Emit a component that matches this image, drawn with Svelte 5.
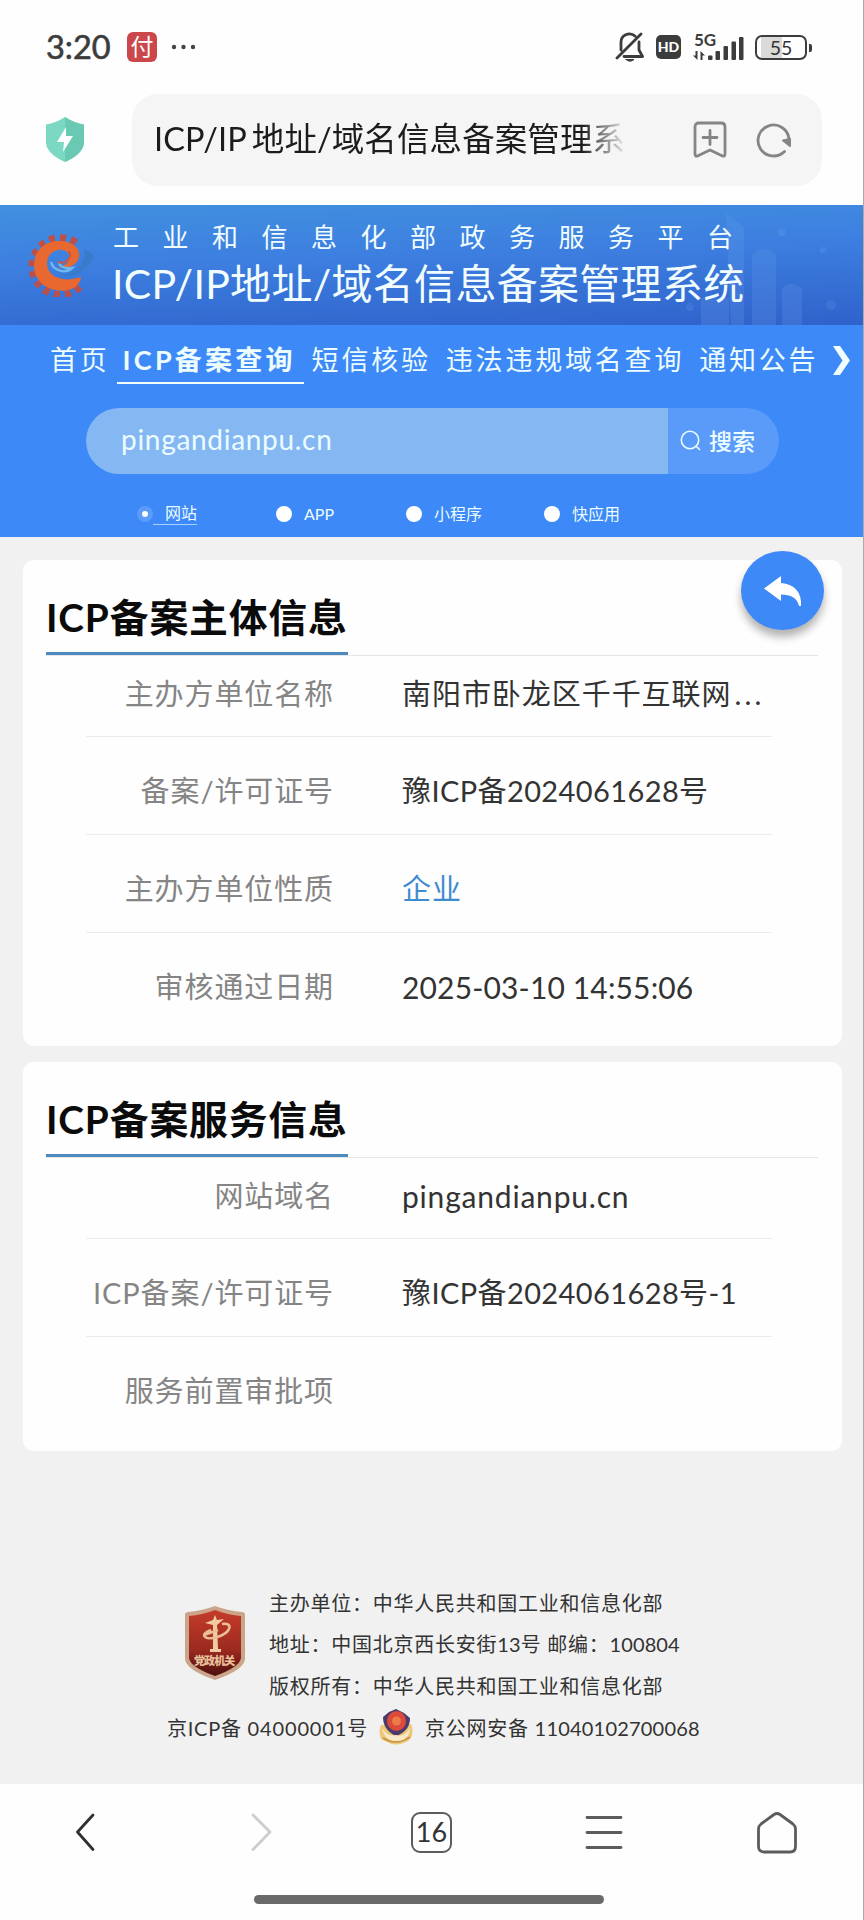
<script>
	const tabs = [
		{ name: '首页' },
		{ name: 'ICP备案查询', active: true },
		{ name: '短信核验' },
		{ name: '违法违规域名查询' },
		{ name: '通知公告' }
	];

	const types = ['网站', 'APP', '小程序', '快应用'];
	let selected = '网站';
	let keyword = 'pingandianpu.cn';

	const cards = [
		{
			title: 'ICP备案主体信息',
			rows: [
				{ label: '主办方单位名称', value: '南阳市卧龙区千千互联网', kind: 'company' },
				{ label: '备案/许可证号', value: '豫ICP备2024061628号' },
				{ label: '主办方单位性质', value: '企业', kind: 'link' },
				{ label: '审核通过日期', value: '2025-03-10 14:55:06', kind: 'date' }
			]
		},
		{
			title: 'ICP备案服务信息',
			rows: [
				{ label: '网站域名', value: 'pingandianpu.cn', kind: 'domain' },
				{ label: 'ICP备案/许可证号', value: '豫ICP备2024061628号-1' },
				{ label: '服务前置审批项', value: '' }
			]
		}
	];
</script>

<div class="phone">
	<div class="status">
		<span class="time">3:20</span>
		<span class="pay">付</span>
		<svg class="dots" width="26" height="6" viewBox="0 0 26 6" fill="#444"><circle cx="3" cy="3" r="2.2"/><circle cx="12.5" cy="3" r="2.2"/><circle cx="22" cy="3" r="2.2"/></svg>
		<div class="status-right">
			<svg width="30" height="32" viewBox="0 0 30 32" fill="none" stroke="#3c3c3c" stroke-width="2.8" stroke-linecap="round" stroke-linejoin="round">
				<path d="M6 19V12a8.5 8.5 0 0 1 14-7M24 11v8l3.500 6.500H9M2 27 26 3"/>
				<path d="M11 28.500h8q-4 3.500-8 0z" fill="#3c3c3c" stroke-width="1"/>
			</svg>
			<span class="hd">HD</span>
			<svg class="signal" width="51" height="29" viewBox="0 0 51 29" fill="#3c3c3c">
				<text x="1" y="12.500" font-size="17" font-weight="700" font-family="Lato, sans-serif">5G</text>
				<path d="M2.500 18h2v9L0 22.500h2.500zM7.500 27h2v-4.500H12L7.500 18z"/>
				<rect x="15" y="22.500" width="4.500" height="4.500" rx="1"/><rect x="22.500" y="18" width="4.500" height="9" rx="1"/><rect x="30.500" y="13" width="4.500" height="14" rx="1"/><rect x="38.500" y="8.500" width="4.500" height="18.500" rx="1"/><rect x="46" y="4" width="4.500" height="23" rx="1"/>
			</svg>
			<span class="battery">55</span>
		</div>
	</div>

	<div class="address">
		<svg class="shield" width="40" height="46" viewBox="0 0 40 46">
			<path d="M20 0Q29 6 39 7.500V26Q38 37 20 45Q2 37 1 26V7.500Q11 6 20 0Z" fill="#7bd8c2"/>
			<path d="M20 0Q29 6 39 7.500V26Q38 37 20 45Z" fill="#69c9b3"/>
			<path d="M21 10 12 25h7l-1 10 10-16h-7z" fill="#fff"/>
		</svg>
		<div class="url">
			<span class="url-text"><span class="url-latin">ICP/IP</span>地址/域名信息备案管理系</span>
			<svg width="34" height="38" viewBox="0 0 34 38" fill="none" stroke="#858585" stroke-width="2.800" stroke-linecap="round" stroke-linejoin="round">
				<path d="M6 2h22q4 0 4 4v27q0 3.500-3.500 1.500L17 29 5.500 34.500Q2 36.500 2 33V6q0-4 4-4zM17 9.500v14M10 16.500h14"/>
			</svg>
			<svg class="reload" width="38" height="38" viewBox="0 0 38 38" fill="none" stroke="#858585" stroke-width="2.800" stroke-linecap="round">
				<path d="M29.500 30.500A15.500 15.500 0 1 1 34 18"/>
				<path d="M28 19.500 35 18v7z" fill="#858585" stroke-width="2" stroke-linejoin="round"/>
			</svg>
		</div>
	</div>

	<header>
		<svg class="skyline" width="220" height="120" viewBox="0 0 220 120">
			<defs><linearGradient id="tower" x1="0" y1="0" x2="0" y2="1"><stop offset="0" stop-color="#9cc8ff" stop-opacity=".08"/><stop offset="1" stop-color="#9cc8ff" stop-opacity=".13"/></linearGradient></defs>
			<g fill="url(#tower)">
				<path d="M83 8 101 22V120H88zM109 50q12-12 24 0v70h-24zM139 84q9-10 20 0v36h-20zM58 93h28v27H58z"/>
				<circle cx="139" cy="27" r="4"/><circle cx="180" cy="45" r="3"/><circle cx="188" cy="100" r="5"/><circle cx="47" cy="102" r="4"/>
			</g>
		</svg>
		<svg class="logo" width="68" height="64" viewBox="0 0 68 64" fill="none">
			<path d="M52 54A28.500 28.500 0 1 1 51 11.500" stroke="#bb504a" stroke-width="7" stroke-dasharray="6 5"/>
			<path d="M53 44C52 54 42 59 30 57.500C16 56 6 46 6 32C6 17 18 7 32 8C45 8 53 16 51 24C49 33 38 37 29 34C36 34 43 29 41 22C38 14 24 15 20 25C15 39 29 52 53 44Z" fill="#e9682f"/>
			<path d="M23 31c5 14 22 13 31-1 3-6 3-9 1-14 5 2 8 3 11 7-2 1-2 2-2 4-8 15-29 23-39 8z" fill="#397bcb"/>
			<path d="M23 29c2 9 15 12 21 6-6 1-12-1-13-5" stroke="#6fb7ed" stroke-width="2.500"/>
			<path d="M30 29c7 3 15-4 11-11" stroke="#c15a4c" stroke-width="2"/>
		</svg>
		<div class="titles">
			<p class="platform">工业和信息化部政务服务平台</p>
			<h1>ICP/IP地址/域名信息备案管理系统</h1>
		</div>
	</header>

	<section class="query">
		<nav>
			{#each tabs as tab}
				<a class:active={tab.active}>{tab.name}</a>
			{/each}
			<svg width="17" height="29" viewBox="0 0 17 29"><path d="M0 0h7l10 14.500L7 29H0l9.500-14.500z" fill="#f2fdff"/></svg>
		</nav>
		<div class="search">
			<div class="input">{keyword}</div>
			<button>
				<svg width="21" height="21" viewBox="0 0 21 21" fill="none" stroke="#e9fbff" stroke-width="1.600" stroke-linecap="round"><circle cx="10" cy="10" r="8.700"/><path d="m16.200 16.200 3.300 3.300"/></svg>
				搜索
			</button>
		</div>
		<div class="types">
			{#each types as type}
				<label class:checked={type === selected}><i></i><span>{type}</span></label>
			{/each}
		</div>
	</section>

	<main>
		{#each cards as card}
			<section class="card">
				<div class="card-head"><h2>{card.title}</h2></div>
				<dl>
					{#each card.rows as row}
						<div class="row">
							<dt>{row.label}</dt>
							<dd class={row.kind}>{row.value}{#if row.kind === 'company'}<span class="more">...</span>{/if}</dd>
						</div>
					{/each}
				</dl>
			</section>
		{/each}
		<button class="back">
			<svg width="38" height="32" viewBox="0 0 38 32" fill="#fff"><path d="M0 13.500 17 1v7C31 9 38 18 37 31h-2C33 23 27 19.500 17 19.500V26z"/></svg>
		</button>
	</main>

	<footer>
		<div class="sponsor">
			<svg width="62" height="76" viewBox="0 0 62 76">
				<defs><linearGradient id="red" x1="0" y1="0" x2="0" y2="1"><stop offset="0" stop-color="#c43c29"/><stop offset=".6" stop-color="#9c2a20"/><stop offset="1" stop-color="#4c100c"/></linearGradient></defs>
				<path d="M31 1Q45 6 58 7q3 0 3 3V54Q60 65 31 75Q2 65 1 54V10q0-3 3-3Q17 6 31 1Z" fill="#cba58a"/>
				<path d="M31 5Q44 10 57 11V53Q56 62 31 71Q6 62 5 53V11Q18 10 31 5Z" fill="url(#red)"/>
				<path d="M29 20 21 18l8-3 2-5 2 5 7-1-7 6 1 24h3v3H26v-3h3z" fill="#f0caa2"/>
				<path d="M38 19c12-2 9 9-5 13-13 4-18-3-6-7M20 30l14-5" fill="none" stroke="#eabf95" stroke-width="2.500"/>
				<text x="31" y="60" text-anchor="middle" font-size="11" font-weight="900" font-family="Noto Sans CJK SC, sans-serif" fill="#e9c09c" textLength="42">党政机关</text>
			</svg>
			<div class="lines">
				<p>主办单位：中华人民共和国工业和信息化部</p>
				<p>地址：中国北京西长安街<b>13</b>号 邮编：<b>100804</b></p>
				<p>版权所有：中华人民共和国工业和信息化部</p>
			</div>
		</div>
		<div class="records">
			<span class="icp">京ICP备 <b>04000001</b>号</span>
			<svg width="36" height="38" viewBox="0 0 36 38">
				<path d="M3 17Q0 23 3 31L7 33q11 7 23 0l3-3q3-7 0-14z" fill="#edc878"/>
				<path d="M5 30q13 8 27-1" fill="none" stroke="#c99645" stroke-width="2"/>
				<path d="M5 9 11 4 18 1l8 4 6 5q0 13-14 18Q5 22 5 9z" fill="#4a3b6b"/>
				<ellipse cx="18.500" cy="13" rx="9.500" ry="10" fill="#db4a3a"/>
				<circle cx="18.500" cy="13" r="4.500" fill="#ee7a48"/>
				<path d="M4 20q5 9 14 7 8 3 14-7-1 13-13 13-12 1-15-13z" fill="#f8e9c6"/>
			</svg>
			<span class="police">京公网安备 <b>11040102700068</b></span>
		</div>
	</footer>

	<div class="toolbar">
		<div class="tools">
			<svg width="42" height="42" viewBox="0 0 42 42" stroke="#303030"><path d="M28 3 12.500 20 28 37.500"/></svg>
			<svg width="42" height="42" viewBox="0 0 42 42" stroke="#cdcdcd"><path d="M15 3 32 20 15 37.500"/></svg>
			<span class="count">16</span>
			<svg width="42" height="42" viewBox="0 0 42 42" stroke="#5c5c5c"><path d="M4 5.500h34M4 20.500h34M4 35.500h34"/></svg>
			<svg width="42" height="42" viewBox="0 0 42 42" stroke="#5c5c5c"><path d="M18 2.500q3-2 6 0L37 12q2.500 2 2.500 5v17.500q0 5.500-5.500 5.500H8q-5.500 0-5.500-5.500V17q0-3 2.500-5z"/></svg>
		</div>
		<div class="home-bar"></div>
	</div>
</div>

<style>
	:global(body) {
		background: #fff;
	}
	.phone {
		box-sizing: border-box;
		width: 864px;
		height: 1920px;
		overflow: hidden;
		display: flex;
		flex-direction: column;
		border-right: 1px solid #aaa;
		background: #fefefe;
		font-family: Lato, "Noto Sans CJK SC", sans-serif;
		color: #333;
	}
	p, h1, h2, dl, dd {
		margin: 0;
	}
	b {
		font-weight: 400;
		letter-spacing: .1px;
	}
	button {
		border: 0;
		padding: 0;
		font-family: inherit;
	}
	svg {
		flex: none;
	}

	/* status bar */
	.status {
		height: 94px;
		box-sizing: border-box;
		padding-left: 46px;
		display: flex;
		align-items: center;
	}
	.time {
		width: 81px;
		font-size: 32.500px;
		font-weight: 400;
		line-height: 40px;
		color: #3c3c3c;
		-webkit-text-stroke: .6px #3c3c3c;
	}
	.pay {
		width: 30px;
		height: 30px;
		border-radius: 6px;
		background: #cb474a;
		color: #fff;
		font-size: 23px;
		line-height: 29px;
		text-align: center;
	}
	.dots {
		margin-left: 14px;
	}
	.status-right {
		margin-left: auto;
		padding-right: 56px;
		display: flex;
		align-items: center;
	}
	.hd {
		margin: 0 12px 0 11px;
		width: 25px;
		height: 24px;
		border-radius: 5px;
		background: #3c3c3c;
		color: #fff;
		font-size: 14px;
		font-weight: 900;
		line-height: 24px;
		text-align: center;
	}
	.battery {
		position: relative;
		box-sizing: border-box;
		margin-left: 11px;
		width: 52px;
		height: 25px;
		border: 2px solid #3c3c3c;
		border-radius: 7px;
		background: linear-gradient(90deg, #fff 4px, #dadada 4px, #dadada 52%, #fff 52%) padding-box;
		font-size: 19.500px;
		line-height: 21px;
		text-align: center;
	}
	.battery::after {
		content: '';
		position: absolute;
		right: -7px;
		top: 7px;
		width: 3px;
		height: 8px;
		border-radius: 0 2px 2px 0;
		background: #3c3c3c;
	}

	/* address bar */
	.address {
		height: 111px;
		padding-left: 45px;
		display: flex;
		align-items: flex-start;
	}
	.shield {
		margin: 23px 47px 0 0;
	}
	.url {
		box-sizing: border-box;
		width: 690px;
		height: 92px;
		padding-left: 22px;
		border-radius: 26px;
		background: #f5f5f5;
		display: flex;
		align-items: center;
	}
	.url-text {
		width: 490px;
		margin-right: 49px;
		margin-top: -2px;
		white-space: nowrap;
		font-size: 32.500px;
		line-height: 48px;
		letter-spacing: .1px;
		color: #1c1c1c;
		-webkit-mask-image: linear-gradient(90deg, #000 428px, transparent 474px);
		mask-image: linear-gradient(90deg, #000 428px, transparent 474px);
	}
	.url-latin {
		margin-right: 5px;
	}
	.reload {
		margin-left: 28px;
	}

	/* site header */
	header {
		position: relative;
		height: 120px;
		padding-left: 28px;
		display: flex;
		background: linear-gradient(178deg, #4190df 0%, #3d7fe0 42%, #2f62cb 100%);
		color: #f1fdff;
		overflow: hidden;
	}
	.skyline {
		position: absolute;
		right: 0;
		top: 0;
	}
	.logo {
		margin: 28px 16px 0 0;
	}
	.titles {
		position: relative;
		white-space: nowrap;
	}
	.platform {
		margin-top: 12px;
		padding-left: 1px;
		font-size: 26px;
		line-height: 40px;
		letter-spacing: 23.500px;
	}
	h1 {
		font-size: 41px;
		line-height: 54px;
		font-weight: 400;
		letter-spacing: .3px;
	}

	.query {
		height: 212px;
		background: #3c89f7;
		color: #ecfcff;
	}
	nav {
		height: 83px;
		padding-left: 50px;
		display: flex;
		white-space: nowrap;
		font-size: 27px;
		letter-spacing: 2.800px;
	}
	nav a {
		height: 59px;
		box-sizing: border-box;
		padding-top: 15px;
		line-height: 40px;
		margin-right: 15px;
	}
	nav a.active {
		width: 187px;
		box-sizing: border-box;
		margin: 0 8px 0 -8px;
		padding-left: 6px;
		border-bottom: 2px solid #f1fdff;
		font-weight: 700;
		letter-spacing: 3.200px;
	}
	nav svg {
		margin-top: 21px;
	}
	.search {
		width: 693px;
		height: 66px;
		margin-left: 86px;
		display: flex;
		border-radius: 33px;
		overflow: hidden;
	}
	.input {
		width: 582px;
		box-sizing: border-box;
		padding-left: 35px;
		background: #85b8f3;
		font-size: 28px;
		line-height: 63px;
		letter-spacing: .7px;
	}
	.search button {
		flex: 1;
		padding: 0 0 2px 12px;
		display: flex;
		align-items: center;
		gap: 8px;
		background: #5a9bfa;
		color: #ecfcff;
		font-size: 23px;
		font-weight: 500;
	}
	.types {
		display: flex;
		padding: 28px 0 0 137px;
		font-size: 16px;
		line-height: 22px;
	}
	.types label {
		display: flex;
		align-items: center;
	}
	.types label:nth-child(1) {
		width: 139px;
	}
	.types label:nth-child(2) {
		width: 130px;
	}
	.types label:nth-child(3) {
		width: 138px;
	}
	.types i {
		box-sizing: border-box;
		width: 16px;
		height: 16px;
		border-radius: 50%;
		background: #fff;
	}
	.types span {
		padding-left: 12px;
	}
	.types .checked i {
		border: 5.500px solid #5b9cfa;
	}
	.types .checked span {
		border-bottom: 1px solid #a8d0ff;
	}

	/* result cards */
	main {
		position: relative;
		height: 914px;
		box-sizing: border-box;
		padding: 23px 21px 0 23px;
		background: #f1f1f1;
	}
	.card {
		box-sizing: border-box;
		height: 486px;
		margin-bottom: 16px;
		padding: 0 24px 0 23px;
		border-radius: 11px;
		background: #fefefe;
	}
	.card:nth-child(2) {
		height: 389px;
	}
	.card-head {
		height: 96px;
		box-sizing: border-box;
		border-bottom: 1px solid #e6e6e6;
	}
	h2 {
		box-sizing: border-box;
		width: 302px;
		height: 95px;
		padding: 30px 0 0;
		border-bottom: 3px solid #4e8ac0;
		font-size: 38.800px;
		line-height: 54px;
		font-weight: 700;
		letter-spacing: .85px;
		color: #0b0b0b;
		white-space: nowrap;
	}
	dl {
		width: 686px;
		margin-left: 40px;
	}
	.row {
		height: 98px;
		box-sizing: border-box;
		padding-top: 10px;
		display: flex;
		align-items: center;
		border-bottom: 1px solid #ececec;
		font-size: 29px;
		line-height: 44px;
		white-space: nowrap;
	}
	.row:first-child {
		height: 81px;
		padding: 0 0 4px;
	}
	.row:last-child {
		border: 0;
	}
	dt {
		width: 248px;
		margin-right: 68px;
		text-align: right;
		letter-spacing: .9px;
		color: #858585;
	}
	dd {
		letter-spacing: .4px;
		color: #333;
	}
	.company {
		letter-spacing: .95px;
	}
	.more {
		letter-spacing: 3.200px;
		margin-left: 3px;
	}
	.link {
		letter-spacing: .9px;
		color: #3f8bd0;
	}
	.date {
		font-size: 30px;
		letter-spacing: .15px;
	}
	.domain {
		font-size: 30px;
		letter-spacing: .8px;
	}
	.back {
		position: absolute;
		left: 741px;
		top: 14px;
		width: 83px;
		height: 79px;
		border-radius: 50%;
		background: #3c89f7;
		box-shadow: 0 7px 9px rgba(0, 0, 0, .3);
		display: flex;
		align-items: center;
		justify-content: center;
	}

	footer {
		height: 333px;
		box-sizing: border-box;
		padding-top: 132px;
		background: #f1f1f1;
		font-size: 20px;
		color: #333;
		letter-spacing: .75px;
		white-space: nowrap;
	}
	.sponsor {
		display: flex;
		padding-left: 184px;
	}
	.sponsor svg {
		margin: 22px 23px 0 0;
	}
	.sponsor p {
		height: 41.300px;
		line-height: 41.300px;
	}
	.records {
		display: flex;
		align-items: center;
		padding-left: 167px;
		height: 41px;
	}
	.records svg {
		margin: 0 11px 0 10px;
	}
	.icp b {
		letter-spacing: .85px;
	}
	.police b {
		letter-spacing: .2px;
	}

	/* browser toolbar */
	.toolbar {
		flex: 1;
		background: #fefefe;
	}
	.tools {
		height: 111px;
		box-sizing: border-box;
		padding: 28px 65px 0 65px;
		display: flex;
		justify-content: space-between;
	}
	.tools svg {
		fill: none;
		stroke-width: 2.800;
		stroke-linecap: round;
		stroke-linejoin: round;
	}
	.count {
		box-sizing: border-box;
		width: 41px;
		height: 41px;
		border: 2.500px solid #5c5c5c;
		border-radius: 9px;
		font-size: 27px;
		line-height: 36px;
		text-align: center;
	}
	.home-bar {
		width: 350px;
		height: 9px;
		margin-left: 254px;
		border-radius: 5px;
		background: #6a6a6a;
	}
</style>
